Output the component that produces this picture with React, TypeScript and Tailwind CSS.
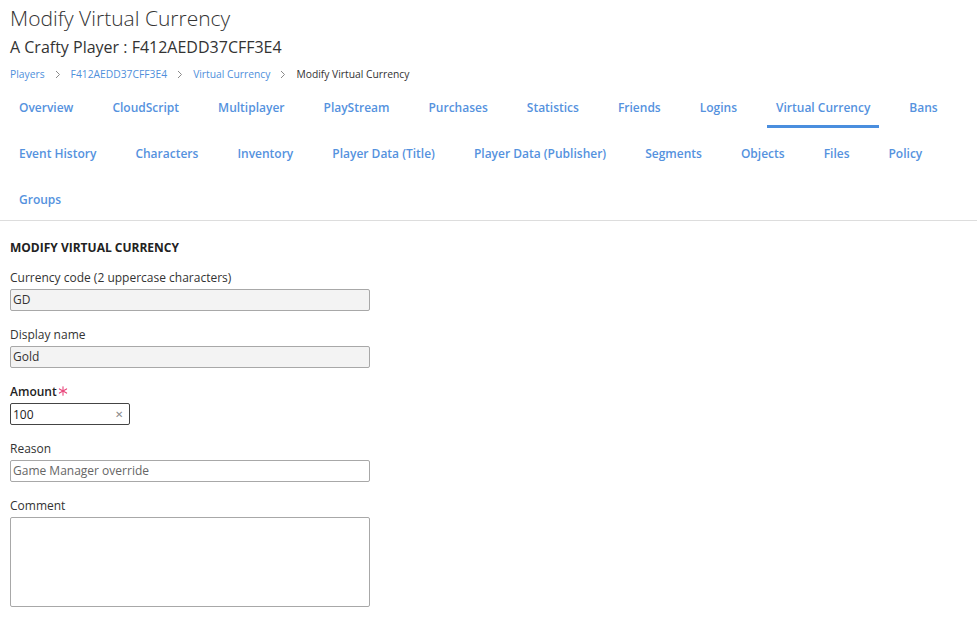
import { useState } from "react";

const tabs = [
  "Overview",
  "CloudScript",
  "Multiplayer",
  "PlayStream",
  "Purchases",
  "Statistics",
  "Friends",
  "Logins",
  "Virtual Currency",
  "Bans",
  "Event History",
  "Characters",
  "Inventory",
  "Player Data (Title)",
  "Player Data (Publisher)",
  "Segments",
  "Objects",
  "Files",
  "Policy",
  "Groups",
];

function Chevron() {
  return (
    <svg width="6" height="9" viewBox="0 0 6 9" className="mx-[10px]">
      <path d="M1 1l3.5 3.5L1 8" fill="none" stroke="#8a8a8a" strokeWidth="1" />
    </svg>
  );
}

// asterisco de campo obrigatório (6 pontas)
function Required() {
  return (
    <svg width="10" height="10" viewBox="0 0 10 10" className="ml-[1px] mt-[-3px]">
      <g stroke="#e8457a" strokeWidth="1.1" strokeLinecap="round">
        <path d="M5 0.8v8.4" />
        <path d="M1.4 2.9l7.2 4.2" />
        <path d="M1.4 7.1l7.2-4.2" />
      </g>
    </svg>
  );
}

export default function App() {
  const [amount, setAmount] = useState("100");

  return (
    <div className="w-[977px] h-[619px] bg-white text-[#333] font-['Open_Sans',sans-serif] overflow-hidden">
      {/* cabeçalho */}
      <div className="px-[10px] pt-[3px]">
        <h1 className="text-[21px] leading-[30px] font-light text-[#333]">Modify Virtual Currency</h1>
        <h2 className="text-[16px] leading-[24px] mt-[2px] text-[#333]">A Crafty Player : F412AEDD37CFF3E4</h2>
        <nav className="flex items-center text-[10.3px] leading-[16px] mt-[7px]">
          <a className="text-[#4f8fdb]">Players</a>
          <Chevron />
          <a className="text-[#4f8fdb]">F412AEDD37CFF3E4</a>
          <Chevron />
          <a className="text-[#4f8fdb]">Virtual Currency</a>
          <Chevron />
          <span className="text-[#333]">Modify Virtual Currency</span>
        </nav>
      </div>

      {/* abas */}
      <div className="flex flex-wrap gap-y-[2px] mt-[2px] pl-[10px] border-b border-[#dddddd]">
        {tabs.map((t) => (
          <div
            key={t}
            className={`mr-[21px] px-[9px] h-[44px] pt-[14px] text-[12px] leading-[20px] font-semibold text-[#5592de] border-b-[3px] ${
              t === "Virtual Currency" ? "border-[#4a8ede]" : "border-transparent"
            }`}
          >
            {t}
          </div>
        ))}
      </div>

      {/* formulário */}
      <div className="px-[10px] pt-[19px] text-[12px]">
        <div className="font-bold text-[12px] leading-[16px] text-[#222] mb-[14px]">MODIFY VIRTUAL CURRENCY</div>

        <div className="mb-[16px]">
          <label className="block leading-[16px] mb-[3px]">Currency code (2 uppercase characters)</label>
          <div className="w-[360px] h-[22px] bg-[#f3f3f3] border border-[#a8a8a8] rounded-[2px] px-[2px] leading-[20px] text-[#333]">
            GD
          </div>
        </div>

        <div className="mb-[16px]">
          <label className="block leading-[16px] mb-[3px]">Display name</label>
          <div className="w-[360px] h-[22px] bg-[#f3f3f3] border border-[#a8a8a8] rounded-[2px] px-[2px] leading-[20px] text-[#333]">
            Gold
          </div>
        </div>

        <div className="mb-[16px]">
          <label className="flex items-center leading-[16px] mb-[3px] font-semibold text-[#222]">
            Amount
            <Required />
          </label>
          <div className="relative w-[120px] h-[22px] border border-[#444] rounded-[2px]">
            <input
              value={amount}
              onChange={(e) => setAmount(e.target.value)}
              className="w-full h-full px-[2px] text-[12px] outline-none bg-transparent text-[#222]"
            />
            <span className="absolute right-[6px] top-[3px] text-[10px] leading-[15px] text-[#8a8a8a]">✕</span>
          </div>
        </div>

        <div className="mb-[16px]">
          <label className="block leading-[16px] mb-[3px]">Reason</label>
          <div className="w-[360px] h-[22px] bg-white border border-[#a8a8a8] rounded-[2px] px-[2px] leading-[20px] text-[#666]">
            Game Manager override
          </div>
        </div>

        <div>
          <label className="block leading-[16px] mb-[3px]">Comment</label>
          <textarea className="block w-[360px] h-[90px] bg-white border border-[#a8a8a8] rounded-[2px] resize-none outline-none" />
        </div>
      </div>
    </div>
  );
}
